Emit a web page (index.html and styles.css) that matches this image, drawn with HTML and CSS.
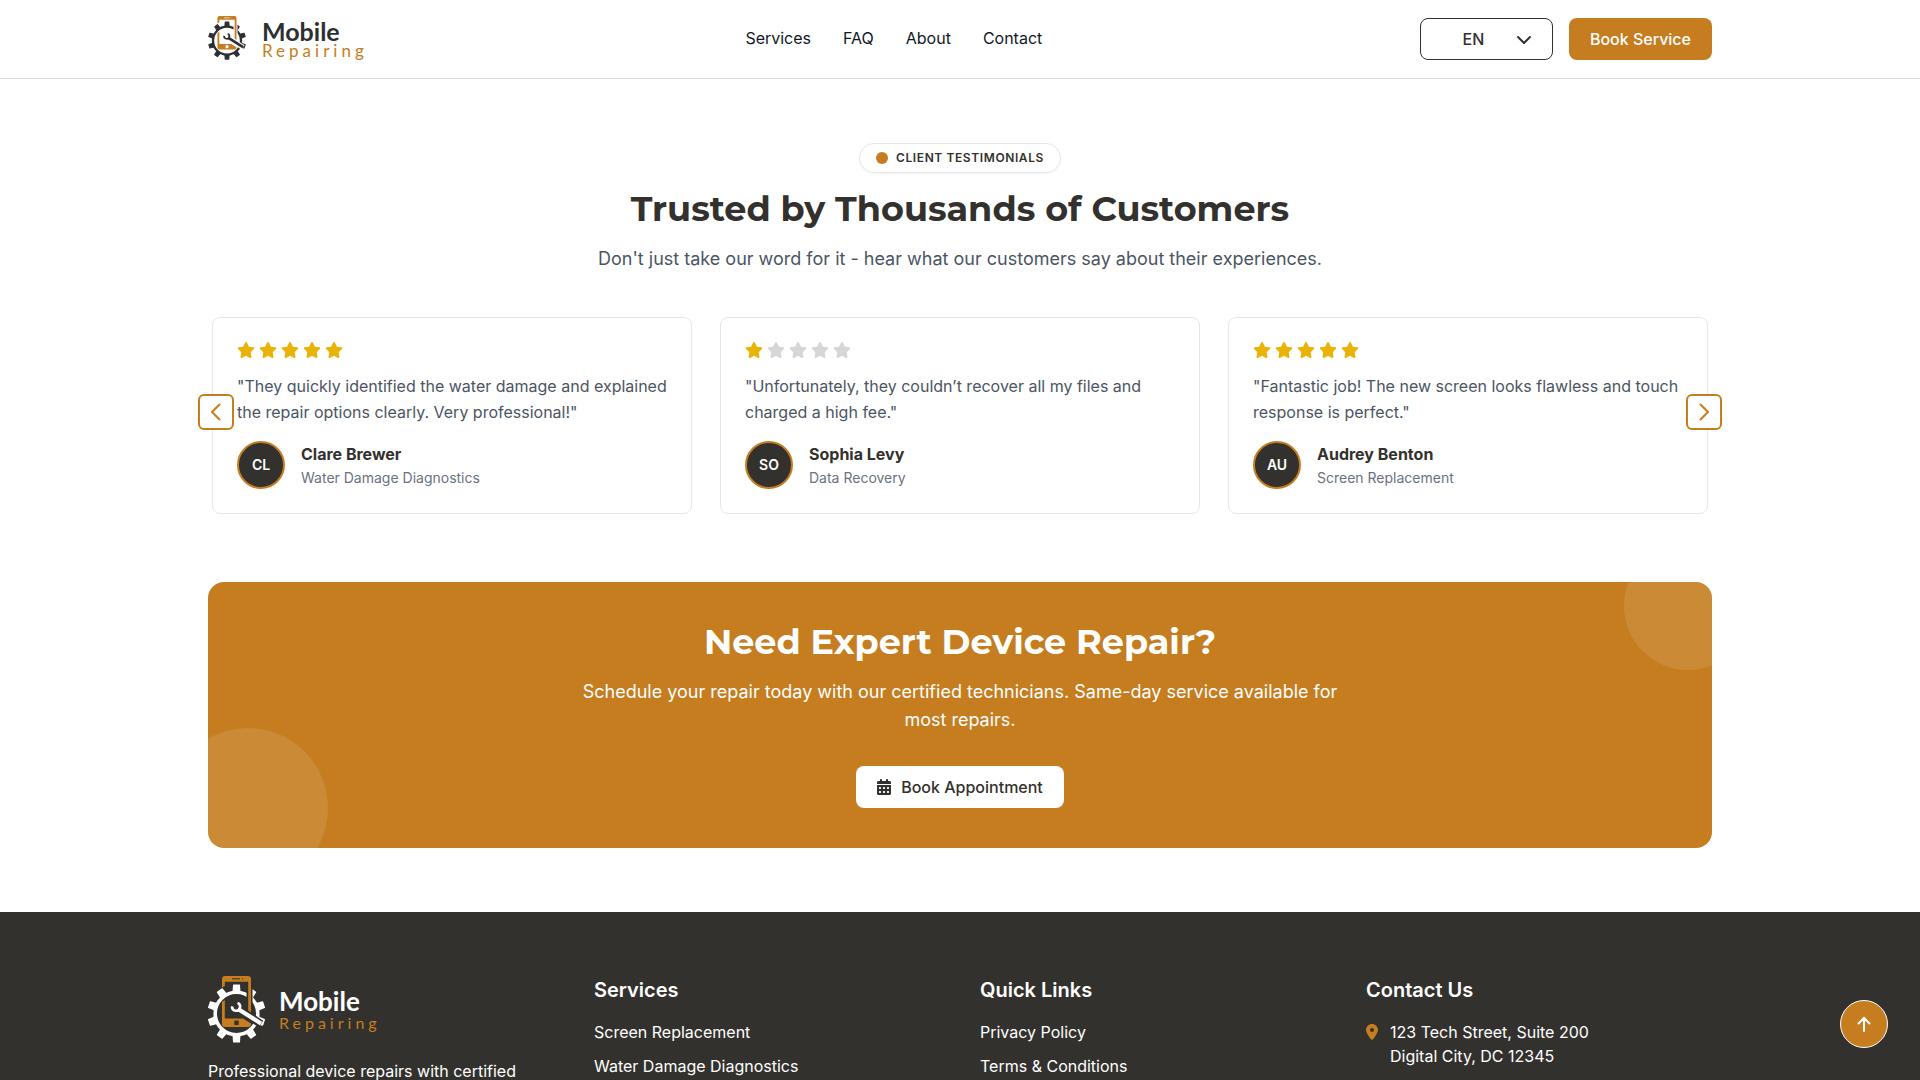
FILE: index.html
```
<!DOCTYPE html>
<html lang="en">
<head>
    <meta charset="UTF-8">
    <meta name="viewport" content="width=device-width, initial-scale=1.0">
    <title>Mobile Repairing</title>
    <link rel="stylesheet" href="styles.css">
</head>
<body>
    <!-- Shared icons -->
    <svg class="sprite" aria-hidden="true">
        <symbol id="icon-star" viewBox="0 0 576 512">
            <path d="M316.9 18C311.6 7 300.4 0 288.1 0s-23.4 7-28.8 18L195 150.3 51.4 171.5c-12 1.8-22 10.2-25.7 21.7s-.7 24.2 7.9 32.7L137.8 329 113.2 474.7c-2 12 3 24.2 12.9 31.3s23 8 33.8 2.3l128.3-68.5 128.3 68.5c10.8 5.7 23.9 4.9 33.8-2.3s14.9-19.3 12.9-31.3L438.5 329 542.7 225.9c8.6-8.5 11.7-21.2 7.9-32.7s-13.7-19.9-25.7-21.7L381.2 150.3 316.9 18z"/>
        </symbol>
        <symbol id="icon-logo" viewBox="0 0 57 67">
            <g class="logo-gear">
                <circle cx="28.5" cy="37.5" r="21.3"/>
                <path id="tooth" d="M24.5 16 25 9Q25 8.5 25.5 8.5H31.5Q32 8.5 32 9L32.5 16Z"/>
                <use href="#tooth" transform="rotate(36 28.5 37.5)"/>
                <use href="#tooth" transform="rotate(72 28.5 37.5)"/>
                <use href="#tooth" transform="rotate(108 28.5 37.5)"/>
                <use href="#tooth" transform="rotate(144 28.5 37.5)"/>
                <use href="#tooth" transform="rotate(180 28.5 37.5)"/>
                <use href="#tooth" transform="rotate(216 28.5 37.5)"/>
                <use href="#tooth" transform="rotate(252 28.5 37.5)"/>
                <use href="#tooth" transform="rotate(288 28.5 37.5)"/>
                <use href="#tooth" transform="rotate(324 28.5 37.5)"/>
            </g>
            <path class="logo-gap" d="M41.5 6V34" stroke-width="6"/>
            <path class="logo-phone" d="M14 12V3Q14 0 17 0H40Q43 0 43 3V37L40.2 35V5.7H16.8V10Q15 10.5 14 12Z"/>
            <path class="logo-phone" d="M14 26 16.8 24V42.5H35L43 47.5V48Q43 51 40 51H17Q14 51 14 48Z"/>
            <path class="logo-gap" d="M24 2.8H32M34 2.8H35" stroke-width="1"/>
            <path class="logo-gap" d="M26.3 46.8H30.7" stroke-width="4.4"/>
            <path class="logo-gap" d="M32 34 53 48" stroke-width="8"/>
            <path class="logo-tool" d="M24.1 30.3A4 4 0 1 0 29.5 27" stroke-width="2.6"/>
            <path class="logo-tool" d="M30 33 53 47.5" stroke-width="4.2"/>
        </symbol>
    </svg>

    <header class="site-header">
        <div class="container header-inner">
            <a href="#" class="logo">
                <svg class="logo-mark"><use href="#icon-logo"/></svg>
                <span class="logo-text">
                    <span class="logo-name">Mobile</span>
                    <span class="logo-sub">Repairing</span>
                </span>
            </a>

            <nav class="main-nav">
                <a href="#services">Services</a>
                <a href="#faq">FAQ</a>
                <a href="#about">About</a>
                <a href="#contact">Contact</a>
            </nav>

            <div class="header-actions">
                <div class="lang-select">
                    <select id="lang" name="lang" aria-label="Language">
                        <option selected>EN</option>
                        <option>FR</option>
                        <option>ES</option>
                    </select>
                    <svg class="lang-arrow" viewBox="0 0 16 10"><path d="M2 2l6 6 6-6"/></svg>
                </div>
                <button type="button" class="btn btn-primary">Book Service</button>
            </div>
        </div>
    </header>

    <main class="container">
        <section class="testimonials">
            <div class="section-head">
                <span class="badge"><span class="badge-dot"></span>Client Testimonials</span>
                <h2 class="section-title">Trusted by Thousands of Customers</h2>
                <p class="section-text">Don't just take our word for it - hear what our customers say about their experiences.</p>
            </div>

            <div class="slider">
                <article class="card">
                    <div class="stars">
                        <svg><use href="#icon-star"/></svg>
                        <svg><use href="#icon-star"/></svg>
                        <svg><use href="#icon-star"/></svg>
                        <svg><use href="#icon-star"/></svg>
                        <svg><use href="#icon-star"/></svg>
                    </div>
                    <p class="quote">"They quickly identified the water damage and explained the repair options clearly. Very professional!"</p>
                    <div class="author">
                        <div class="avatar">CL</div>
                        <div class="author-info">
                            <h3 class="author-name">Clare Brewer</h3>
                            <p class="author-service">Water Damage Diagnostics</p>
                        </div>
                    </div>
                </article>

                <article class="card">
                    <div class="stars">
                        <svg><use href="#icon-star"/></svg>
                        <svg class="off"><use href="#icon-star"/></svg>
                        <svg class="off"><use href="#icon-star"/></svg>
                        <svg class="off"><use href="#icon-star"/></svg>
                        <svg class="off"><use href="#icon-star"/></svg>
                    </div>
                    <p class="quote">"Unfortunately, they couldn’t recover all my files and charged a high fee."</p>
                    <div class="author">
                        <div class="avatar">SO</div>
                        <div class="author-info">
                            <h3 class="author-name">Sophia Levy</h3>
                            <p class="author-service">Data Recovery</p>
                        </div>
                    </div>
                </article>

                <article class="card">
                    <div class="stars">
                        <svg><use href="#icon-star"/></svg>
                        <svg><use href="#icon-star"/></svg>
                        <svg><use href="#icon-star"/></svg>
                        <svg><use href="#icon-star"/></svg>
                        <svg><use href="#icon-star"/></svg>
                    </div>
                    <p class="quote">"Fantastic job! The new screen looks flawless and touch response is perfect."</p>
                    <div class="author">
                        <div class="avatar">AU</div>
                        <div class="author-info">
                            <h3 class="author-name">Audrey Benton</h3>
                            <p class="author-service">Screen Replacement</p>
                        </div>
                    </div>
                </article>

                <button type="button" class="slider-btn prev" aria-label="Previous">
                    <svg viewBox="0 0 10 18"><path d="M9 1L1 9l8 8"/></svg>
                </button>
                <button type="button" class="slider-btn next" aria-label="Next">
                    <svg viewBox="0 0 10 18"><path d="M1 1l8 8-8 8"/></svg>
                </button>
            </div>
        </section>

        <section class="cta">
            <h2 class="section-title">Need Expert Device Repair?</h2>
            <p class="cta-text">Schedule your repair today with our certified technicians. Same-day service available for most repairs.</p>
            <button type="button" class="btn btn-light">
                <svg viewBox="0 0 448 512"><path d="M128 0c17.7 0 32 14.3 32 32V64H288V32c0-17.7 14.3-32 32-32s32 14.3 32 32V64h48c26.5 0 48 21.5 48 48v48H0V112C0 85.5 21.5 64 48 64H96V32c0-17.7 14.3-32 32-32zM0 192H448V464c0 26.5-21.5 48-48 48H48c-26.5 0-48-21.5-48-48V192zm64 80v32c0 8.8 7.2 16 16 16h32c8.8 0 16-7.2 16-16V272c0-8.8-7.2-16-16-16H80c-8.8 0-16 7.2-16 16zm128 0v32c0 8.8 7.2 16 16 16h32c8.8 0 16-7.2 16-16V272c0-8.8-7.2-16-16-16H208c-8.8 0-16 7.2-16 16zm144-16c-8.8 0-16 7.2-16 16v32c0 8.8 7.2 16 16 16h32c8.8 0 16-7.2 16-16V272c0-8.8-7.2-16-16-16H336zM64 400v32c0 8.8 7.2 16 16 16h32c8.8 0 16-7.2 16-16V400c0-8.8-7.2-16-16-16H80c-8.8 0-16 7.2-16 16zm144-16c-8.8 0-16 7.2-16 16v32c0 8.8 7.2 16 16 16h32c8.8 0 16-7.2 16-16V400c0-8.8-7.2-16-16-16H208zm112 16v32c0 8.8 7.2 16 16 16h32c8.8 0 16-7.2 16-16V400c0-8.8-7.2-16-16-16H336c-8.8 0-16 7.2-16 16z"/></svg>
                Book Appointment
            </button>
        </section>
    </main>

    <footer class="site-footer">
        <div class="container footer-grid">
            <div>
                <a href="#" class="logo logo-footer">
                    <svg class="logo-mark"><use href="#icon-logo"/></svg>
                    <span class="logo-text">
                        <span class="logo-name">Mobile</span>
                        <span class="logo-sub">Repairing</span>
                    </span>
                </a>
                <p>Professional device repairs with certified</p>
            </div>
            <div>
                <h3>Services</h3>
                <ul>
                    <li><a href="#">Screen Replacement</a></li>
                    <li><a href="#">Water Damage Diagnostics</a></li>
                </ul>
            </div>
            <div>
                <h3>Quick Links</h3>
                <ul>
                    <li><a href="#">Privacy Policy</a></li>
                    <li><a href="#">Terms &amp; Conditions</a></li>
                </ul>
            </div>
            <div>
                <h3>Contact Us</h3>
                <address>
                    <svg viewBox="0 0 384 512"><path d="M215.7 499.2C267 435 384 279.4 384 192C384 86 298 0 192 0S0 86 0 192c0 87.4 117 243 168.3 307.2c12.3 15.3 35.1 15.3 47.4 0zM192 128a64 64 0 1 1 0 128 64 64 0 1 1 0-128z"/></svg>
                    <span>123 Tech Street, Suite 200<br>Digital City, DC 12345</span>
                </address>
            </div>
        </div>
    </footer>

    <button type="button" class="to-top" aria-label="Back to top">
        <svg viewBox="0 0 14 16"><path d="M7 15V2M1.5 7.5L7 2l5.5 5.5"/></svg>
    </button>
</body>
</html>
```
FILE: styles.css
```
:root {
    --primary: #c57d20;
    --dark: #33312d;
    --border: #e5e7eb;
    --gray: #4b5563;
}

* {
    box-sizing: border-box;
    margin: 0;
    padding: 0;
}

body {
    height: 100vh;
    overflow: hidden;
    font-family: Inter, sans-serif;
    font-size: 16px;
    line-height: 24px;
    color: var(--dark);
    background-color: #fff;
}

a {
    color: inherit;
    text-decoration: none;
}

ul {
    list-style: none;
}

button, select {
    font-family: inherit;
    font-size: 16px;
    cursor: pointer;
}

.sprite {
    position: absolute;
    width: 0;
    height: 0;
}

.container {
    width: 100%;
    max-width: 1536px;
    margin: 0 auto;
    padding: 0 16px;
}

/* Header */
.site-header {
    position: sticky;
    top: 0;
    z-index: 10;
    background-color: #fff;
    border-bottom: 1px solid #dfdfdf;
}

.header-inner {
    display: flex;
    justify-content: space-between;
    align-items: center;
    height: 78px;
}

.logo {
    --logo-bg: #fff;
    --logo-fg: #2d2f31;
    display: flex;
    align-items: center;
    gap: 16px;
    font-family: Lato, sans-serif;
}

.logo-mark {
    width: 38px;
    height: 44px;
    margin-bottom: 2px;
}

.logo-gear {
    fill: var(--logo-fg);
}

.logo-gear circle {
    fill: none;
    stroke: var(--logo-fg);
    stroke-width: 3.6;
}

.logo-gap {
    fill: none;
    stroke: var(--logo-bg);
}

.logo-phone {
    fill: var(--primary);
}

.logo-tool {
    fill: none;
    stroke: var(--logo-fg);
}

.logo-text {
    display: flex;
    flex-direction: column;
    gap: 2px;
    padding-top: 2px;
}

.logo-name {
    color: var(--logo-fg);
    font-size: 25px;
    font-weight: 700;
    line-height: 20px;
}

.logo-sub {
    color: var(--primary);
    font-size: 17px;
    line-height: 16px;
    letter-spacing: 4px;
}

.main-nav {
    display: flex;
    gap: 32px;
    padding-bottom: 2px;
    color: #111827;
}

.header-actions {
    display: flex;
    gap: 16px;
}

.lang-select {
    position: relative;
}

.lang-select select {
    width: 133px;
    height: 42px;
    padding-right: 26px;
    appearance: none;
    color: var(--dark);
    background-color: #fff;
    border: 1px solid var(--dark);
    border-radius: 8px;
    font-weight: 500;
    text-align: center;
    text-align-last: center;
}

.lang-arrow {
    position: absolute;
    top: 17px;
    right: 21px;
    width: 16px;
    height: 10px;
    fill: none;
    stroke: var(--dark);
    stroke-width: 2;
    stroke-linecap: round;
    stroke-linejoin: round;
    pointer-events: none;
}

.btn {
    display: inline-flex;
    align-items: center;
    gap: 10px;
    height: 42px;
    padding: 0 21px;
    border: none;
    border-radius: 8px;
    font-weight: 500;
}

.btn-primary {
    background-color: var(--primary);
    color: #fff;
}

.btn-light {
    background-color: #fff;
    color: var(--dark);
}

.btn svg {
    width: 14px;
    height: 16px;
    fill: currentColor;
}

/* Testimonials */
.testimonials {
    padding: 64px 0 68px;
}

.section-head {
    display: flex;
    flex-direction: column;
    align-items: center;
    margin-bottom: 36px;
    text-align: center;
}

.badge {
    display: flex;
    align-items: center;
    gap: 8px;
    height: 30px;
    margin-bottom: 16px;
    padding: 0 16px;
    border: 1px solid var(--border);
    border-radius: 15px;
    box-shadow: 0 1px 2px rgba(0, 0, 0, 0.05);
    font-size: 12px;
    font-weight: 600;
    letter-spacing: 0.05em;
    text-transform: uppercase;
}

.badge-dot {
    width: 12px;
    height: 12px;
    border-radius: 50%;
    background-color: var(--primary);
}

.section-title {
    margin-bottom: 16px;
    font-family: Montserrat, Inter, sans-serif;
    font-size: 35px;
    font-weight: 700;
    line-height: 40px;
}

.section-text {
    color: var(--gray);
    font-size: 18px;
    line-height: 28px;
}

.slider {
    position: relative;
    display: grid;
    grid-template-columns: repeat(3, 1fr);
    gap: 28px;
    padding: 8px 4px 0;
}

.card {
    padding: 24px;
    border: 1px solid var(--border);
    border-radius: 8px;
}

.stars {
    display: flex;
    gap: 4px;
    margin-bottom: 15px;
}

.stars svg {
    width: 18px;
    height: 16px;
    fill: #eab308;
}

.stars .off {
    fill: #d4d6d8;
}

.quote {
    margin-bottom: 16px;
    color: var(--gray);
    line-height: 26px;
}

.author {
    display: flex;
    gap: 16px;
}

.author-info {
    padding-top: 1px;
}

.avatar {
    display: flex;
    justify-content: center;
    align-items: center;
    width: 48px;
    height: 48px;
    border: 2px solid var(--primary);
    border-radius: 50%;
    background-color: var(--dark);
    color: #fff;
    font-size: 14px;
    font-weight: 600;
}

.author-name {
    font-size: 16px;
    font-weight: 700;
    line-height: 24px;
}

.author-service {
    color: #6b7280;
    font-size: 14px;
    line-height: 23px;
}

.slider-btn {
    position: absolute;
    top: 50%;
    display: flex;
    justify-content: center;
    align-items: center;
    width: 36px;
    height: 36px;
    border: 2px solid var(--primary);
    border-radius: 6px;
    background-color: #fff;
    transform: translateY(-50%);
}

.slider-btn.prev {
    left: -10px;
}

.slider-btn.next {
    right: -10px;
}

.slider-btn svg {
    width: 10px;
    height: 18px;
    fill: none;
    stroke: var(--primary);
    stroke-width: 2;
}

/* Call to action */
.cta {
    position: relative;
    padding: 40px;
    overflow: hidden;
    border-radius: 16px;
    background-color: var(--primary);
    color: #fff;
    text-align: center;
}

.cta::before, .cta::after {
    content: "";
    position: absolute;
    border-radius: 50%;
    background-color: rgba(255, 255, 255, 0.1);
}

.cta::before {
    top: -40px;
    right: -40px;
    width: 128px;
    height: 128px;
}

.cta::after {
    bottom: -40px;
    left: -40px;
    width: 160px;
    height: 160px;
}

.cta-text {
    max-width: 768px;
    margin: 0 auto 32px;
    font-size: 18px;
    line-height: 28px;
}

.cta .btn {
    vertical-align: top;
}

/* Footer */
.site-footer {
    margin-top: 64px;
    padding: 64px 0;
    background-color: var(--dark);
    color: #fff;
}

.footer-grid {
    display: grid;
    grid-template-columns: repeat(4, 1fr);
    gap: 40px;
}

.site-footer h3 {
    margin-bottom: 16px;
    font-size: 20px;
    font-weight: 600;
    line-height: 28px;
}

.site-footer li {
    margin-bottom: 10px;
}

.site-footer address {
    display: flex;
    gap: 12px;
    font-style: normal;
}

.site-footer address svg {
    width: 12px;
    height: 16px;
    margin-top: 4px;
    fill: var(--primary);
}

.logo-footer {
    --logo-bg: #33312d;
    --logo-fg: #fff;
    gap: 14px;
    margin-bottom: 16px;
}

.logo-footer .logo-mark {
    width: 57px;
    height: 67px;
    margin-bottom: 0;
}

.logo-footer .logo-text {
    gap: 4px;
}

.logo-footer .logo-name {
    font-size: 26px;
}

.logo-footer .logo-sub {
    font-size: 16px;
}

.to-top {
    position: fixed;
    right: 32px;
    bottom: 32px;
    display: flex;
    justify-content: center;
    align-items: center;
    width: 48px;
    height: 48px;
    border: 1px solid #fff;
    border-radius: 50%;
    background-color: var(--primary);
}

.to-top svg {
    width: 14px;
    height: 16px;
    fill: none;
    stroke: #fff;
    stroke-width: 2;
    stroke-linecap: round;
}
```
